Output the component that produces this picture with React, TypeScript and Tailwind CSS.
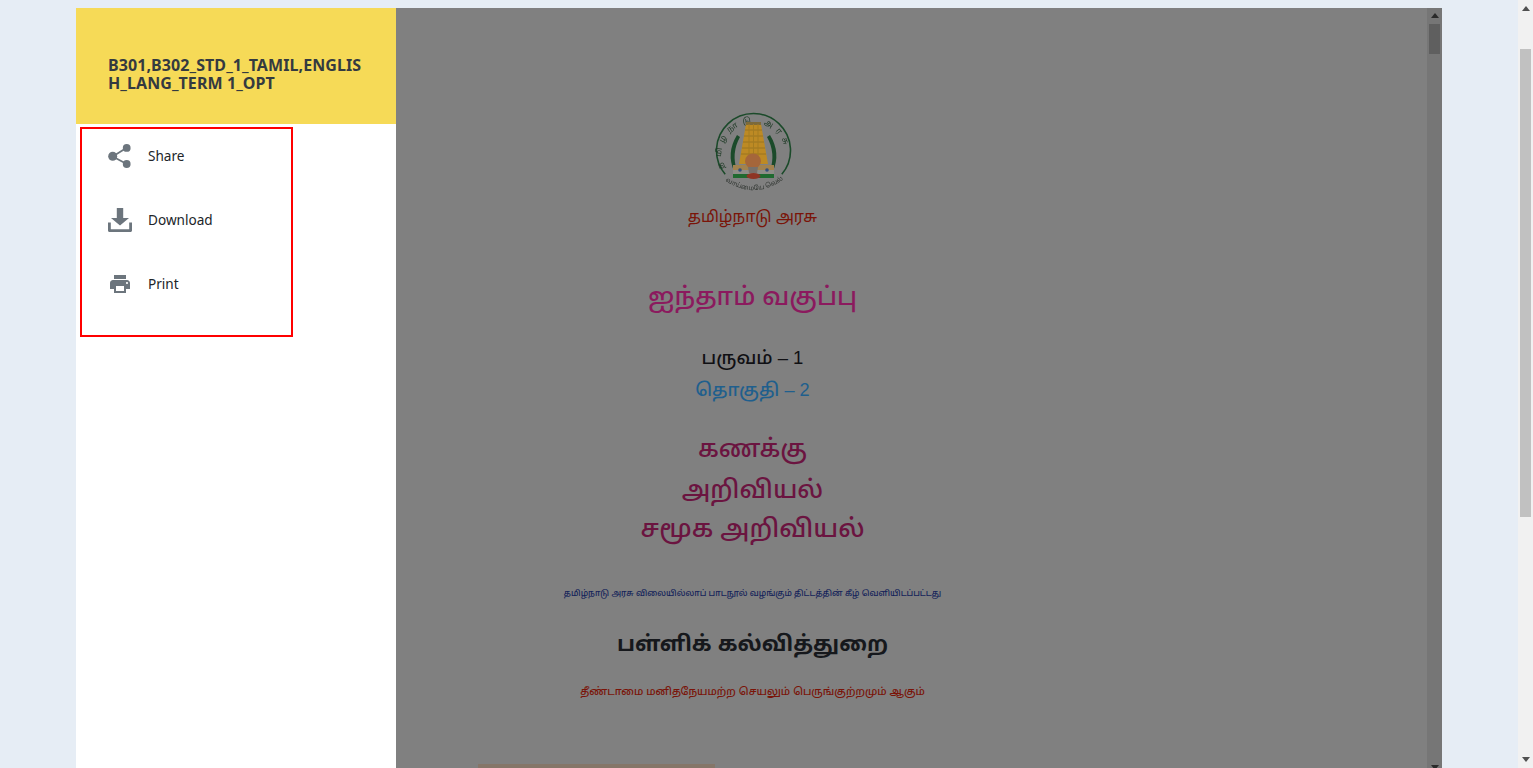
const ICON_GRAY = "#6c757d";
const TAMIL_FONT = "'Noto Sans Tamil','Liberation Sans',sans-serif";

function ShareIcon() {
  return (
    <svg width="24" height="24" viewBox="0 0 24 24" fill={ICON_GRAY}>
      <path d="M4.700 12.500L18.700 3.700M4.700 12.500L18.700 20" stroke={ICON_GRAY} strokeWidth="1.800" />
      <circle cx="18.700" cy="3.900" r="3.900" />
      <circle cx="18.700" cy="20" r="3.900" />
      <circle cx="4.700" cy="12.300" r="4.500" />
    </svg>
  );
}

function DownloadIcon() {
  return (
    <svg width="24" height="24" viewBox="0 0 24 24" fill={ICON_GRAY}>
      <path d="M8.800 0h6.400v10H21l-9 7.500L3 10h5.800z" />
      <path d="M0 14.500h2.800v6.700h18.400v-6.700H24V22.500c0 .8-.7 1.500-1.500 1.500h-21C.7 24 0 23.300 0 22.500z" />
    </svg>
  );
}

function PrintIcon() {
  return (
    <svg width="24" height="24" viewBox="0 0 24 24" fill={ICON_GRAY}>
      <path d="M19 8H5c-1.660 0-3 1.340-3 3v6h4v4h12v-4h4v-6c0-1.660-1.340-3-3-3zm-3 11H8v-5h8v5zm3-7c-.55 0-1-.45-1-1s.45-1 1-1 1 .45 1 1-.45 1-1 1zm-1-9H6v4h12V3z" />
    </svg>
  );
}

function TnEmblem() {
  return (
    <svg width="80" height="84" viewBox="0 0 80 84" className="block shrink-0 blur-[0.4px]">
      <defs>
        <path id="emblemArc" d="M13 60 A32 32 0 1 1 68 60" />
        <path id="emblemMotto" d="M10 68 Q40 90 71 68" />
      </defs>
      <path d="M12.200 63.300 A37 37 0 1 1 68.800 63.300" fill="none" stroke="#1b4a2a" strokeWidth="1.600" />
      <text fontSize="8" fill="#1f3a26" fontFamily={TAMIL_FONT} letterSpacing="5">
        <textPath href="#emblemArc" startOffset="3">தமிழ்நாடு அரசு</textPath>
      </text>
      {/* palm fronds */}
      <path d="M24 24 Q13 42 21 60 L24 60 Q18 42 27 26z" fill="#1b4a2a" />
      <path d="M57 24 Q68 42 60 60 L57 60 Q63 42 54 26z" fill="#1b4a2a" />
      {/* gopuram */}
      <path d="M33 13 H48 L55 53 H26z" fill="#bd8a24" />
      <path d="M33 11 H48 V14 H33z" fill="#7d6a3a" />
      <path d="M32 19 H49 M31 25 H50 M30 31 H51 M29 37 H52 M28 43 H53" stroke="#9a7420" strokeWidth="1" />
      <path d="M36 13 V46 M40.500 13 V46 M45 13 V46" stroke="#a57c20" strokeWidth="1" />
      {/* flag */}
      <rect x="20" y="54" width="41" height="5" fill="#a1824f" />
      <rect x="20" y="59" width="41" height="4" fill="#8e8e88" />
      <rect x="20" y="63" width="41" height="4" fill="#1f6a30" />
      <circle cx="27" cy="59" r="1.800" fill="#33507c" />
      <circle cx="54" cy="59" r="1.800" fill="#33507c" />
      {/* state emblem */}
      <ellipse cx="40" cy="50" rx="8" ry="7.500" fill="#a5663a" />
      <path d="M35 56 H45 L44 62 H36z" fill="#77706a" />
      <ellipse cx="40.500" cy="65" rx="7" ry="3" fill="#8e3524" />
      <text fontSize="6.500" fill="#2f3430" fontFamily={TAMIL_FONT}>
        <textPath href="#emblemMotto" startOffset="3">வாய்மையே வெல்லும்</textPath>
      </text>
    </svg>
  );
}

function UpArrow({ color }: { color: string }) {
  return (
    <svg width="8" height="5" viewBox="0 0 8 5" fill={color}>
      <path d="M4 0l4 5H0z" />
    </svg>
  );
}

function DownArrow({ color }: { color: string }) {
  return (
    <svg width="8" height="5" viewBox="0 0 8 5" fill={color}>
      <path d="M0 0h8L4 5z" />
    </svg>
  );
}

export default function App() {
  const actions = [
    { label: "Share", icon: <ShareIcon /> },
    { label: "Download", icon: <DownloadIcon /> },
    { label: "Print", icon: <PrintIcon /> },
  ];

  return (
    <div className="flex h-screen overflow-hidden bg-[#e6edf5] font-['Noto_Sans',sans-serif]">
      <div className="flex-1 min-w-0 pl-[76px] pr-[76px] pt-2">
        <div className="flex h-full">
          {/* left side */}
          <div className="w-[320px] shrink-0 bg-white">
            <div className="h-[116px] bg-[#f6da57] pl-8 pr-8 pt-[48px]">
              <h1 className="text-[16px] leading-[18px] font-bold tracking-[0.08px] text-[#343a40] break-all">
                B301,B302_STD_1_TAMIL,ENGLISH_LANG_TERM 1_OPT
              </h1>
            </div>
            <div className="ml-1 mt-[3px] w-[213px] h-[210px] border-2 border-[#ff0000] pl-[26px] pt-[6px]">
              {actions.map((a) => (
                <div key={a.label} className="flex items-center h-[64px] pb-[22px]">
                  {a.icon}
                  <span className="ml-4 text-[13.600px] text-[#212529]">{a.label}</span>
                </div>
              ))}
            </div>
          </div>

          {/* pdf viewer */}
          <div className="flex-1 min-w-0 flex bg-[#808080]">
            <div className="flex-1 min-w-0 overflow-hidden flex flex-col items-center font-['Liberation_Sans','Noto_Sans_Tamil',sans-serif] pt-[103px] pr-[318px]">
              <TnEmblem />
              <p className="mt-[12px] text-[16px] leading-[20px] text-[#7a1408]">தமிழ்நாடு அரசு</p>
              <p className="mt-[49px] text-[25.200px] leading-[40px] font-medium text-[#8b1a5e]">ஐந்தாம் வகுப்பு</p>
              <p className="mt-[29px] text-[18.500px] leading-[26px] font-medium text-[#101014]">பருவம் – 1</p>
              <p className="mt-[6px] text-[18.200px] leading-[26px] font-medium text-[#1f5f8d]">தொகுதி – 2</p>
              <p className="mt-[26px] text-[24.500px] leading-[39px] font-medium text-[#6b1440]">கணக்கு</p>
              <p className="mt-[2px] text-[24.800px] leading-[39px] font-medium text-[#6b1440]">அறிவியல்</p>
              <p className="text-[25.300px] leading-[39px] font-medium text-[#6b1440]">சமூக அறிவியல்</p>
              <p className="mt-[37px] text-[8.400px] leading-[16px] font-medium text-[#14235a] whitespace-nowrap">தமிழ்நாடு அரசு விலையில்லாப் பாடநூல் வழங்கும் திட்டத்தின் கீழ் வெளியிடப்பட்டது</p>
              <p className="mt-[25px] text-[21.700px] leading-[36px] font-bold text-[#16181c]">பள்ளிக் கல்வித்துறை</p>
              <p className="mt-[20px] text-[10.600px] leading-[18px] font-medium text-[#7a1408] whitespace-nowrap">தீண்டாமை மனிதநேயமற்ற செயலும் பெருங்குற்றமும் ஆகும்</p>
              <div className="self-start ml-[82px] mt-[64px] w-[237px] h-[40px] shrink-0 bg-[#857669]" />
            </div>
            {/* inner scrollbar */}
            <div className="w-[15px] shrink-0 bg-[#767676] flex flex-col items-center pt-[5px]">
              <UpArrow color="#2a2a2a" />
              <div className="mt-[6px] w-[11px] h-[30px] bg-[#5f5f5f]" />
              <div className="mt-auto mb-[-2px]">
                <DownArrow color="#2a2a2a" />
              </div>
            </div>
          </div>
        </div>
      </div>

      {/* page scrollbar */}
      <div className="w-[15px] shrink-0 bg-[#f1f1f1] flex flex-col items-center pt-[6px] pb-[6px]">
        <UpArrow color="#505050" />
        <div className="mt-[38px] w-[11px] h-[468px] bg-[#c1c1c1]" />
        <div className="mt-auto">
          <DownArrow color="#505050" />
        </div>
      </div>
    </div>
  );
}
